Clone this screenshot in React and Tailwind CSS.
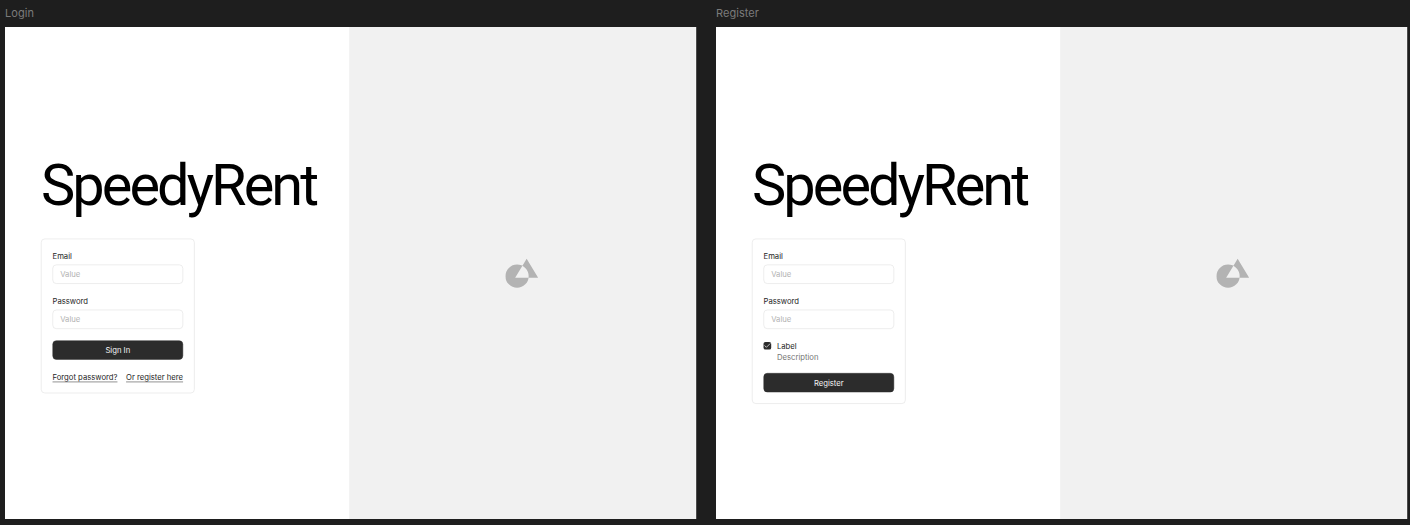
function Field({ label }) {
  return (
    <div className="flex flex-col gap-2">
      <span className="h-[22px] leading-[24px] text-[#1e1e1e]">{label}</span>
      <div className="flex h-10 items-center rounded-lg border border-[#d9d9d9] bg-white px-[15px] leading-none text-[#b3b3b3]">
        Value
      </div>
    </div>
  );
}

function Button({ children }) {
  return (
    <div className="flex h-10 w-full items-center justify-center rounded-lg border border-[#2c2c2c] bg-[#2c2c2c] pt-px leading-none text-[#f5f5f5]">
      {children}
    </div>
  );
}

function Card({ children }) {
  return (
    <div className="flex w-[320px] flex-col gap-6 rounded-lg border border-[#d9d9d9] bg-white px-[23px] py-[23px] text-base">
      <Field label="Email" />
      <Field label="Password" />
      {children}
    </div>
  );
}

function Shapes() {
  return (
    <svg className="mr-[2px] mt-[2px] h-[62.5px] w-[70.8px]" viewBox="505 258.5 34 30" fill="#b3b3b3">
      <path fillRule="evenodd" d="M505.3 276.3a11.6 11.6 0 1 0 23.2 0a11.6 11.6 0 1 0-23.2 0ZM526.5 259l11.5 19h-23Z" />
    </svg>
  );
}

function Screen({ title, children }) {
  return (
    <section className="flex w-[692px] flex-col">
      <h2 className="h-[27px] pt-[5px] text-[11px] leading-[16px] tracking-[0.005em] text-[#7b7b7b]">{title}</h2>
      <div className="h-[492px] w-[692px] overflow-hidden">
        <div className="flex h-[1025px] w-[1440px] origin-top-left scale-[0.48] bg-white">
          <div className="w-[717px] shrink-0 pl-[75px] pt-[256px]">
            <h1 className="h-[185px] whitespace-nowrap font-[Roboto,sans-serif] text-[120px] leading-[146px] tracking-[-6px] text-black">
              SpeedyRent
            </h1>
            {children}
          </div>
          <div className="flex w-[722px] shrink-0 items-center justify-center bg-[#f1f1f1]">
            <Shapes />
          </div>
        </div>
      </div>
    </section>
  );
}

export default function App() {
  return (
    <main className="flex h-[525px] w-[1410px] gap-[19px] overflow-hidden bg-[#1e1e1e] pl-[5px] font-[Inter,sans-serif]">
      <Screen title="Login">
        <Card>
          <Button>Sign In</Button>
          <div className="flex h-[22px] justify-between whitespace-nowrap leading-[24px] text-[#1e1e1e] underline decoration-1 underline-offset-4 [text-decoration-skip-ink:none]">
            <span>Forgot password?</span>
            <span>Or register here</span>
          </div>
        </Card>
      </Screen>
      <Screen title="Register">
        <Card>
          <div className="flex h-11 gap-3 leading-[22px]">
            <span className="mt-[3px] flex size-4 items-center justify-center rounded-[4px] bg-[#2c2c2c]">
              <svg className="size-4" viewBox="0 0 16 16" fill="none" stroke="#f5f5f5" strokeWidth="1.6" strokeLinecap="round" strokeLinejoin="round">
                <path d="M13.3 4 6 11.3 2.7 8" />
              </svg>
            </span>
            <div>
              <div className="text-[#1e1e1e]">Label</div>
              <div className="leading-[24px] text-[#757575]">Description</div>
            </div>
          </div>
          <Button>Register</Button>
        </Card>
      </Screen>
    </main>
  );
}
